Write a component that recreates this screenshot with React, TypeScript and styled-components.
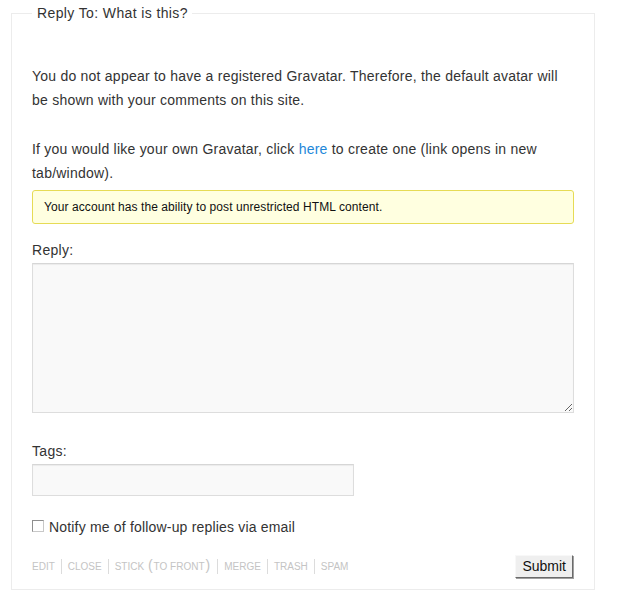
import React from "react";
import styled, { createGlobalStyle } from "styled-components";

const GlobalStyle = createGlobalStyle`
  html, body {
    margin: 0;
    padding: 0;
    background: #ffffff;
  }
  body {
    font-family: "Liberation Sans", Arial, sans-serif;
    color: #333333;
  }
`;

const Page = styled.div`
  padding: 3px 0 0 11px;
  width: 584px;
`;

const Fieldset = styled.fieldset`
  margin: 0;
  min-inline-size: 0;
  width: 584px;
  box-sizing: border-box;
  border: 1px solid #ececec;
  padding: 41px 20px 11px 20px;
  display: flex;
  flex-direction: column;
`;

const Legend = styled.legend`
  padding: 0 4px 0 5px;
  font-size: 14px;
  line-height: 20px;
  letter-spacing: 0.38px;
  color: #333333;
`;

const Paragraph = styled.p<{ $gap?: number }>`
  margin: 0 0 ${(p) => p.$gap ?? 0}px 0;
  font-size: 14px;
  line-height: 24px;
  letter-spacing: 0.23px;
  color: #333333;
`;

const Link = styled.a`
  color: #1e87d9;
  text-decoration: none;
`;

const Notice = styled.div`
  margin-top: 5px;
  border: 1px solid #e6db55;
  border-radius: 3px;
  background: #ffffe0;
  padding: 8px 11px;
  font-size: 12px;
  line-height: 16px;
  letter-spacing: 0.08px;
  color: #111111;
`;

const FieldLabel = styled.label<{ $top: number }>`
  display: block;
  margin-top: ${(p) => p.$top}px;
  font-size: 14px;
  line-height: 20px;
  letter-spacing: 0.3px;
  color: #333333;
`;

const TextArea = styled.textarea`
  display: block;
  margin-top: 3px;
  width: 100%;
  height: 150px;
  box-sizing: border-box;
  border: 1px solid #dddddd;
  border-top-color: #d6d6d6;
  background: #f9f9f9;
  box-shadow: inset 0 1px 1px rgba(0, 0, 0, 0.06);
  resize: vertical;
  font-family: inherit;
  font-size: 14px;
  padding: 4px;
`;

const TextInput = styled.input`
  display: block;
  margin-top: 3px;
  width: 322px;
  height: 32px;
  box-sizing: border-box;
  border: 1px solid #dddddd;
  border-top-color: #d6d6d6;
  background: #f9f9f9;
  box-shadow: inset 0 1px 1px rgba(0, 0, 0, 0.06);
  font-family: inherit;
  font-size: 14px;
  padding: 4px;
`;

const CheckRow = styled.label`
  display: flex;
  align-items: center;
  margin-top: 21px;
  font-size: 14px;
  line-height: 20px;
  letter-spacing: 0.18px;
  color: #333333;
`;

const CheckBox = styled.input`
  appearance: none;
  -webkit-appearance: none;
  margin: 0 5px 0 0;
  width: 12px;
  height: 12px;
  box-sizing: border-box;
  border: 1px solid #8f8f8f;
  border-right-color: #c8c8c8;
  border-bottom-color: #c8c8c8;
  background: #ffffff;
  position: relative;
  top: -1px;
`;

const Footer = styled.div`
  display: flex;
  align-items: center;
  justify-content: space-between;
  margin-top: 18px;
  height: 23px;
`;

const Actions = styled.div`
  display: flex;
  align-items: center;
`;

const Action = styled.a`
  font-size: 10px;
  line-height: 14px;
  color: #c4c4c4;
  text-transform: uppercase;
  text-decoration: none;
`;

const Paren = styled.span`
  font-size: 14px;
  line-height: 10px;
  font-weight: 300;
  margin: 0 1px;
`;

const Separator = styled.span`
  display: inline-block;
  width: 1px;
  height: 15px;
  background: #dcdcdc;
  margin: 0 6px;
`;

const SubmitButton = styled.button`
  height: 23px;
  box-sizing: border-box;
  padding: 0 6px;
  margin-right: 1px;
  font-family: "Liberation Sans", Arial, sans-serif;
  font-size: 14px;
  color: #111111;
  background: #efefef;
  border: 1px solid;
  border-color: #f8f8f8 #6a6a6a #6a6a6a #f8f8f8;
  box-shadow: 1px 1px 0 #a0a0a0;
  border-radius: 0;
  line-height: 19px;
`;

const actions: { label: React.ReactNode }[] = [
  { label: "Edit" },
  { label: "Close" },
  {
    label: (
      <>
        Stick <Paren>(</Paren>to front<Paren>)</Paren>
      </>
    ),
  },
  { label: "Merge" },
  { label: "Trash" },
  { label: "Spam" },
];

export default function App() {
  return (
    <>
      <GlobalStyle />
      <Page>
        <Fieldset>
          <Legend>Reply To: What is this?</Legend>
          <Paragraph $gap={25}>
            You do not appear to have a registered Gravatar. Therefore, the default avatar will
            be shown with your comments on this site.
          </Paragraph>
          <Paragraph>
            If you would like your own Gravatar, click <Link href="#">here</Link> to create one
            (link opens in new tab/window).
          </Paragraph>
          <Notice>Your account has the ability to post unrestricted HTML content.</Notice>
          <FieldLabel $top={16}>Reply:</FieldLabel>
          <TextArea />
          <FieldLabel $top={28}>Tags:</FieldLabel>
          <TextInput type="text" />
          <CheckRow>
            <CheckBox type="checkbox" />
            Notify me of follow-up replies via email
          </CheckRow>
          <Footer>
            <Actions>
              {actions.map((a, i) => (
                <React.Fragment key={i}>
                  {i > 0 && <Separator />}
                  <Action href="#">{a.label}</Action>
                </React.Fragment>
              ))}
            </Actions>
            <SubmitButton type="button">Submit</SubmitButton>
          </Footer>
        </Fieldset>
      </Page>
    </>
  );
}
